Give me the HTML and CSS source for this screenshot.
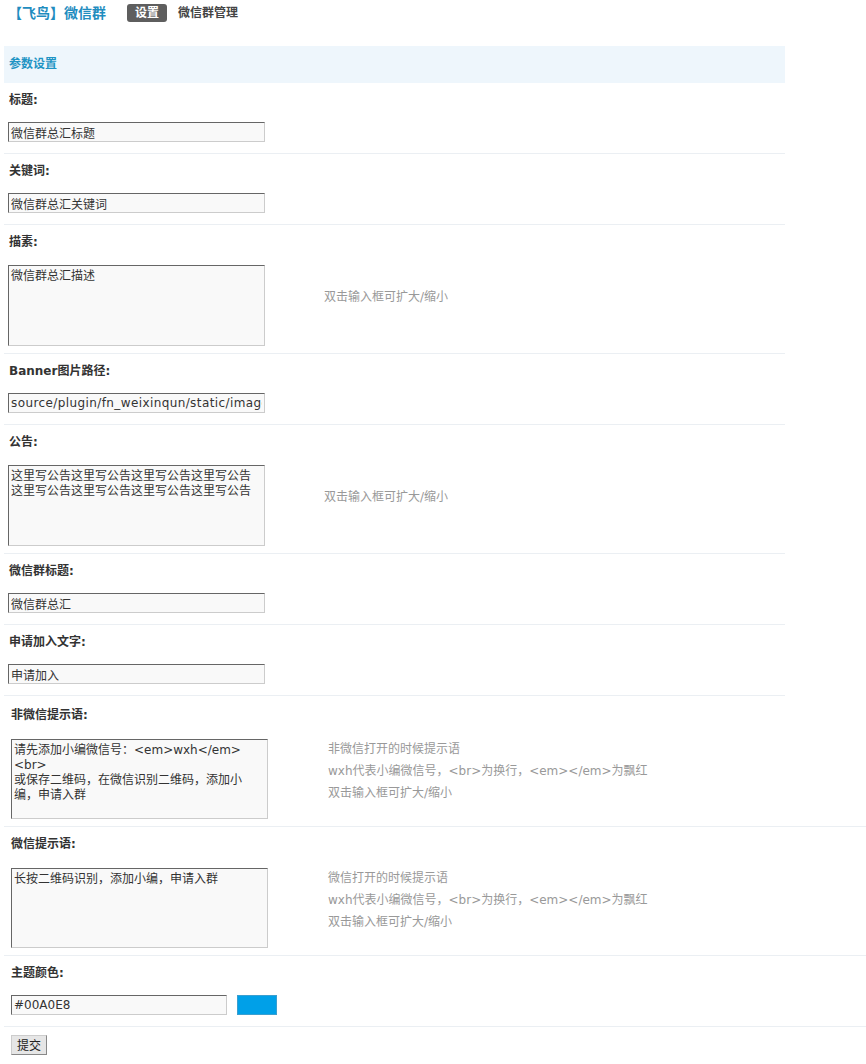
FILE: index.html
```html
<!DOCTYPE html>
<html lang="zh-CN">
<head>
<meta charset="utf-8">
<title>微信群 - 设置</title>
<link rel="stylesheet" href="styles.css">
</head>
<body>
<div class="top">
  <h1 class="brand">【飞鸟】微信群</h1>
  <span class="tab active">设置</span>
  <span class="tab">微信群管理</span>
</div>
<form class="settings">
  <div class="section">
    <div class="partition">参数设置</div>
    <div class="row row-text first">
      <div class="label">标题:</div>
      <div class="value"><input class="txt" type="text" value="微信群总汇标题"></div>
    </div>
    <div class="row row-text">
      <div class="label">关键词:</div>
      <div class="value"><input class="txt" type="text" value="微信群总汇关键词"></div>
    </div>
    <div class="row row-area">
      <div class="label">描素:</div>
      <div class="value"><textarea class="tarea">微信群总汇描述</textarea><div class="tips">双击输入框可扩大/缩小</div></div>
    </div>
    <div class="row row-text">
      <div class="label">Banner图片路径:</div>
      <div class="value"><input class="txt path" type="text" value="source/plugin/fn_weixinqun/static/images/banner.jpg"></div>
    </div>
    <div class="row row-area">
      <div class="label">公告:</div>
      <div class="value"><textarea class="tarea">这里写公告这里写公告这里写公告这里写公告这里写公告这里写公告这里写公告这里写公告</textarea><div class="tips">双击输入框可扩大/缩小</div></div>
    </div>
    <div class="row row-text">
      <div class="label">微信群标题:</div>
      <div class="value"><input class="txt" type="text" value="微信群总汇"></div>
    </div>
    <div class="row row-text">
      <div class="label">申请加入文字:</div>
      <div class="value"><input class="txt" type="text" value="申请加入"></div>
    </div>
  </div>
  <div class="section lower">
    <div class="row row-area first-lower">
      <div class="label">非微信提示语:</div>
      <div class="value"><textarea class="tarea">请先添加小编微信号：&lt;em&gt;wxh&lt;/em&gt;
&lt;br&gt;
或保存二维码，在微信识别二维码，添加小编，申请入群</textarea><div class="tips">非微信打开的时候提示语<br>wxh代表小编微信号，&lt;br&gt;为换行，&lt;em&gt;&lt;/em&gt;为飘红<br>双击输入框可扩大/缩小</div></div>
    </div>
    <div class="row row-area wide">
      <div class="label">微信提示语:</div>
      <div class="value"><textarea class="tarea">长按二维码识别，添加小编，申请入群</textarea><div class="tips">微信打开的时候提示语<br>wxh代表小编微信号，&lt;br&gt;为换行，&lt;em&gt;&lt;/em&gt;为飘红<br>双击输入框可扩大/缩小</div></div>
    </div>
    <div class="row row-text wide">
      <div class="label">主题颜色:</div>
      <div class="value"><input class="txt color" type="text" value="#00A0E8"><span class="swatch"></span></div>
    </div>
    <div class="row submit-row wide">
      <button class="btn" type="button">提交</button>
    </div>
  </div>
</form>
</body>
</html>
```

FILE: styles.css
```css
body {
  margin: 0;
  font-family: "DejaVu Sans", "Noto Sans CJK SC", sans-serif;
  font-size: 12px;
  color: #333;
  background: #fff;
}

.top {
  display: flex;
  align-items: center;
  height: 26px;
  padding-left: 8px;
}

.brand {
  margin: 0 21px 0 0;
  font-size: 14px;
  font-weight: bold;
  color: #1f8dbf;
  line-height: 18px;
}

.tab {
  font-weight: bold;
  color: #444;
  line-height: 18px;
  margin-right: 11px;
}

.tab.active {
  background: #5e5e5e;
  color: #fff;
  padding: 0 8px;
  border-radius: 3px;
}

.settings {
  margin: 20px 0 0 4px;
}

.partition {
  width: 781px;
  height: 37px;
  line-height: 37px;
  padding-left: 5px;
  box-sizing: border-box;
  background: #eef6fc;
  color: #1f94c4;
  font-weight: bold;
}

.row {
  width: 781px;
  border-top: 1px solid #ebeff3;
  padding-top: 8px;
}

.row.first {
  border-top: 0;
}

.row.wide {
  width: auto;
}

.label {
  line-height: 18px;
  padding-left: 5px;
  font-weight: bold;
  color: #333;
}

.value {
  display: flex;
  align-items: center;
  padding-left: 4px;
}

.row-text .value {
  margin-top: 13px;
}

.row-text {
  padding-bottom: 11px;
}

.row-area .value {
  margin-top: 14px;
}

.row-area {
  padding-bottom: 7px;
}

.txt {
  box-sizing: border-box;
  width: 257px;
  height: 20px;
  margin: 0;
  padding: 0 2px;
  border: 1px solid;
  border-color: #666 #ccc #ccc #666;
  background: #f9f9f9;
  font-family: "DejaVu Sans", "Noto Sans CJK SC", sans-serif;
  font-size: 12px;
  color: #333;
  outline: none;
}

.txt.path {
  letter-spacing: 0.4px;
}

.tarea {
  box-sizing: border-box;
  width: 257px;
  height: 81px;
  margin: 0;
  padding: 3px 6px 3px 2px;
  border: 1px solid;
  border-color: #666 #ccc #ccc #666;
  background: #f9f9f9;
  font-family: "DejaVu Sans", "Noto Sans CJK SC", sans-serif;
  font-size: 12px;
  line-height: 15px;
  color: #333;
  resize: none;
  overflow: hidden;
  outline: none;
}

.tips {
  margin: -2px 0 15px 59px;
  line-height: 22px;
  color: #999;
}

.lower .label {
  padding-left: 7px;
}

.lower .value {
  padding-left: 7px;
}

.lower .row-area .value {
  margin-top: 15px;
}

.lower .tarea {
  height: 80px;
}

.lower .tips {
  margin-left: 60px;
}

.row.first-lower {
  padding-top: 10px;
}

.txt.color {
  width: 216px;
}

.swatch {
  display: block;
  width: 40px;
  height: 20px;
  margin-left: 10px;
  box-sizing: border-box;
  background: #00a0e8;
  border: 1px solid #3a9fd0;
}

.submit-row {
  padding-left: 7px;
  padding-bottom: 8px;
}

.btn {
  display: block;
  width: 36px;
  height: 20px;
  margin: 0;
  padding: 0;
  border: 1px solid;
  border-color: #ccc #888 #888 #ccc;
  background: #e6e6e6;
  font-family: "Noto Sans CJK SC", sans-serif;
  font-size: 12px;
  line-height: 18px;
  color: #222;
}
```
